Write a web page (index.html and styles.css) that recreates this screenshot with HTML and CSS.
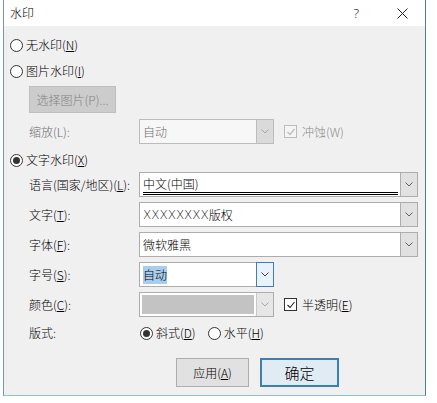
FILE: index.html
```html
<!DOCTYPE html>
<html lang="zh-CN">
<head>
<meta charset="utf-8">
<title>水印</title>
<link rel="stylesheet" href="styles.css">
</head>
<body>
<div class="window">
  <div class="titlebar">
    <span class="title">水印</span>
    <span class="help">?</span>
    <span class="close"><svg width="11" height="11" viewBox="0 0 11 11"><path d="M0.5 0.5 L10.5 10.5 M10.5 0.5 L0.5 10.5" stroke="#222" stroke-width="1" fill="none"/></svg></span>
  </div>
  <div class="content">
    <div class="opt r1"><span class="radio"></span><span>无水印(<u>N</u>)</span></div>
    <div class="opt r2"><span class="radio"></span><span>图片水印(<u>I</u>)</span></div>
    <div class="btn-select">选择图片(P)...</div>
    <div class="field-row scale-row">
      <span class="label disabled">缩放(L):</span>
      <div class="combo short off">
        <div class="value">自动</div>
        <div class="arrow"><svg width="8" height="5" viewBox="0 0 8 5"><path d="M0.5 0.5 L4 4 L7.5 0.5" fill="none" stroke="#a8a8a8" stroke-width="1"/></svg></div>
      </div>
      <div class="chk-group">
        <span class="check off"><svg width="10" height="10" viewBox="0 0 10 10"><path d="M1.5 5 L4 7.5 L8.5 2" fill="none" stroke="#bcbcbc" stroke-width="1.2"/></svg></span>
        <span class="disabled-light">冲蚀(W)</span>
      </div>
    </div>
    <div class="opt r3"><span class="radio on"></span><span>文字水印(<u>X</u>)</span></div>
    <div class="field-row lang-row">
      <span class="label">语言(国家/地区)(<u>L</u>):</span>
      <div class="combo long">
        <div class="value"><div class="dbl">中文(中国)</div></div>
        <div class="arrow"><svg width="8" height="5" viewBox="0 0 8 5"><path d="M0.5 0.5 L4 4 L7.5 0.5" fill="none" stroke="#606060" stroke-width="1"/></svg></div>
      </div>
    </div>
    <div class="field-row">
      <span class="label">文字(<u>T</u>):</span>
      <div class="combo long">
        <div class="value"><span class="xs">XXXXXXXX</span>版权</div>
        <div class="arrow"><svg width="8" height="5" viewBox="0 0 8 5"><path d="M0.5 0.5 L4 4 L7.5 0.5" fill="none" stroke="#606060" stroke-width="1"/></svg></div>
      </div>
    </div>
    <div class="field-row">
      <span class="label">字体(<u>F</u>):</span>
      <div class="combo long">
        <div class="value">微软雅黑</div>
        <div class="arrow"><svg width="8" height="5" viewBox="0 0 8 5"><path d="M0.5 0.5 L4 4 L7.5 0.5" fill="none" stroke="#606060" stroke-width="1"/></svg></div>
      </div>
    </div>
    <div class="field-row">
      <span class="label">字号(<u>S</u>):</span>
      <div class="combo short focus">
        <div class="value"><span class="sel">自动</span></div>
        <div class="arrow"><svg width="8" height="5" viewBox="0 0 8 5"><path d="M0.5 0.5 L4 4 L7.5 0.5" fill="none" stroke="#404040" stroke-width="1"/></svg></div>
      </div>
    </div>
    <div class="field-row">
      <span class="label">颜色(<u>C</u>):</span>
      <div class="combo short color">
        <div class="value"><div class="swatch"></div></div>
        <div class="arrow"><svg width="8" height="5" viewBox="0 0 8 5"><path d="M0.5 0.5 L4 4 L7.5 0.5" fill="none" stroke="#a8a8a8" stroke-width="1"/></svg></div>
      </div>
      <div class="chk-group">
        <span class="check"><svg width="10" height="10" viewBox="0 0 10 10"><path d="M1.5 5 L4 7.5 L8.5 2" fill="none" stroke="#222" stroke-width="1.1"/></svg></span>
        <span>半透明(<u>E</u>)</span>
      </div>
    </div>
    <div class="layout-row">
      <span class="label">版式:</span>
      <span class="radio on"></span><span class="rtext">斜式(<u>D</u>)</span>
      <span class="radio second"></span><span class="rtext">水平(<u>H</u>)</span>
    </div>
    <div class="buttons">
      <div class="btn">应用(<u>A</u>)</div>
      <div class="btn default">确定</div>
    </div>
  </div>
</div>
</body>
</html>
```

FILE: styles.css
```css
* { box-sizing: border-box; }

body {
  margin: 0;
  background: #ffffff;
  font-family: "Noto Sans CJK SC", "Noto Sans", sans-serif;
  font-size: 12px;
  font-weight: 300;
  color: #000;
  line-height: 16px;
}

u { text-decoration: underline; text-underline-offset: 1px; }

.window {
  margin-left: 3px;
  width: 423px;
  height: 396px;
  border-left: 1px solid #6d9aa5;
  border-right: 1px solid #4f7f8a;
  border-bottom: 1px solid #8cc3c9;
  display: flex;
  flex-direction: column;
}

.titlebar {
  height: 26px;
  flex: none;
  background: #fff;
  display: flex;
  align-items: center;
  padding-left: 6px;
}

.title { font-size: 12px; }

.help {
  margin-left: auto;
  font-family: "Noto Sans", sans-serif;
  font-size: 13px;
  color: #222;
}

.close {
  display: flex;
  margin-left: 38px;
  margin-right: 17px;
}

.content {
  flex: 1;
  background: #f0f0f0;
  display: flex;
  flex-direction: column;
  align-items: flex-start;
}

.opt {
  display: flex;
  align-items: center;
  gap: 3px;
  height: 16px;
  margin-left: 6px;
}

.r1 { margin-top: 11px; }
.r2 { margin-top: 10px; }
.r3 { margin-top: 8px; }

.radio {
  width: 13px;
  height: 13px;
  flex: none;
  border: 1px solid #333;
  border-radius: 50%;
  background: #fff;
  display: flex;
  align-items: center;
  justify-content: center;
}

.radio.on::after {
  content: "";
  width: 7px;
  height: 7px;
  border-radius: 50%;
  background: #333;
}

.btn-select {
  margin-top: 7px;
  margin-left: 25px;
  width: 87px;
  height: 27px;
  border: 1px solid #bfbfbf;
  background: #cccccc;
  color: #838383;
  display: flex;
  align-items: center;
  justify-content: center;
}

.field-row {
  display: flex;
  align-items: center;
  margin-left: 25px;
  margin-top: 5px;
  height: 25px;
}

.scale-row { margin-top: 6px; }
.lang-row { margin-top: 4px; }

.label { width: 110px; flex: none; }
.disabled { color: #6d6d6d; }
.disabled-light { color: #8a8a8a; }

.combo {
  display: flex;
  height: 100%;
  border: 1px solid #adadad;
  background: #fff;
}

.combo.long { width: 279px; }
.combo.short { width: 135px; }

.combo .value {
  flex: 1;
  padding-left: 3px;
  display: flex;
  align-items: center;
  min-width: 0;
}

.combo .arrow {
  width: 17px;
  flex: none;
  border-left: 1px solid #adadad;
  background: #e1e1e1;
  display: flex;
  align-items: center;
  justify-content: center;
}

.combo.off { border-color: #bcbcbc; background: #f7f7f7; color: #6d6d6d; }
.combo.off .arrow { background: #dadada; border-left-color: #bcbcbc; }

.combo.focus .arrow {
  border: 1px solid #3f7fb3;
  margin: -1px -1px -1px 0;
  width: 18px;
  background: #e8f2fb;
}

.combo.color .value { padding: 2px; }
.combo.color .arrow { background: #e6e6e6; border-left-color: #c8c8c8; }

.swatch {
  width: 100%;
  height: 100%;
  background: #c3c3c3;
}

.dbl {
  flex: 1;
  align-self: stretch;
  display: flex;
  align-items: center;
  border-bottom: 3px double #000;
  margin-right: 2px;
  margin-bottom: 1px;
  padding-top: 2px;
}

.xs {
  font-family: "DejaVu Sans", sans-serif;
  font-weight: 200;
  font-size: 12px;
  letter-spacing: 0;
  color: #222;
}

.sel {
  background: #a8cdee;
  padding: 1px 0;
  line-height: 16px;
}

.chk-group {
  display: flex;
  align-items: center;
  gap: 5px;
  margin-left: 10px;
}

.check {
  width: 13px;
  height: 13px;
  border: 1px solid #333;
  background: #fff;
  display: flex;
  align-items: center;
  justify-content: center;
}

.check.off { border-color: #bcbcbc; background: #f5f5f5; }

.layout-row {
  display: flex;
  align-items: center;
  margin-left: 25px;
  margin-top: 8px;
  height: 16px;
}

.layout-row .label { width: 111px; }
.rtext { margin-left: 3px; }
.radio.second { margin-left: 12px; }

.buttons {
  display: flex;
  margin-top: 17px;
  margin-left: 172px;
  gap: 11px;
}

.btn {
  width: 73px;
  height: 29px;
  border: 1px solid #adadad;
  background: #e1e1e1;
  display: flex;
  align-items: center;
  justify-content: center;
}

.btn.default {
  width: 79px;
  border: 2px solid #3d7fae;
  background: #e1ebf3;
  font-size: 15px;
}
```
